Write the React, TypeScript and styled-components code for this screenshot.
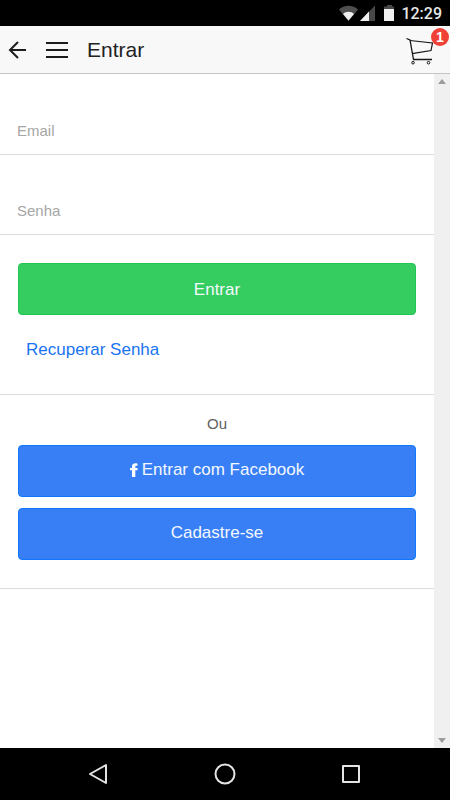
import React from "react";
import styled, { createGlobalStyle } from "styled-components";

const GlobalStyle = createGlobalStyle`
  *, *::before, *::after { box-sizing: border-box; }
  body {
    margin: 0;
    background: #fff;
    font-family: "Liberation Sans", Arial, sans-serif;
  }
  button, input { font-family: inherit; }
`;

const Screen = styled.div`
  display: flex;
  flex-direction: column;
  min-height: 100vh;
`;

const StatusBar = styled.div`
  display: flex;
  align-items: center;
  justify-content: flex-end;
  height: 26px;
  padding: 2px 8px 0 0;
  background: #000;
  color: #e6e6e6;
`;

const StatusIcons = styled.svg`
  display: block;
  margin-right: 6px;
`;

const Clock = styled.time`
  font: 500 16px/24px Roboto, sans-serif;
`;

const Header = styled.header`
  display: flex;
  align-items: center;
  height: 48px;
  padding: 0 16px 0 8px;
  background: #f8f8f8;
  border-bottom: 1px solid #c4c4c4;
`;

const IconButton = styled.button`
  display: block;
  margin: 0;
  padding: 0;
  border: 0;
  background: none;
  color: #1c1c1c;
  line-height: 0;
  cursor: pointer;
`;

const HeaderActions = styled.div`
  display: flex;
  align-items: center;
  gap: 18px;
`;

const Title = styled.h1`
  flex: 1;
  margin: 0 0 0 19px;
  color: #222;
  font-size: 21px;
  line-height: 24px;
  font-weight: 400;
`;

const CartButton = styled(IconButton)`
  position: relative;
  padding-top: 3px;
`;

const Badge = styled.span`
  position: absolute;
  top: -6px;
  right: -15px;
  width: 18px;
  height: 18px;
  border-radius: 50%;
  background: #ef4136;
  color: #fff;
  font-size: 14px;
  line-height: 18px;
  font-weight: 700;
  text-align: center;
`;

const Body = styled.div`
  display: flex;
  flex: 1;
`;

const Content = styled.main`
  flex: 1;
  min-width: 0;
`;

const ScrollTrack = styled.div`
  display: flex;
  flex-direction: column;
  justify-content: space-between;
  align-items: center;
  width: 16px;
  padding: 5px 0;
  background: #f0f0f0;
`;

const Field = styled.div`
  height: 80px;
  padding-top: 34px;
  border-bottom: 1px solid #dcdcdc;

  &:first-child { height: 81px; padding-top: 35px; }
`;

const TextInput = styled.input`
  display: block;
  width: 100%;
  height: 44px;
  padding: 0 17px 2px;
  border: 0;
  outline: 0;
  background: transparent;
  color: #222;
  font-size: 15px;

  &::placeholder { color: #a6a6a6; opacity: 1; }
`;

const Section = styled.section<{ $top: number }>`
  padding: ${({ $top }) => $top}px 18px 28px;
  border-bottom: 1px solid #dcdcdc;
`;

const ActionButton = styled.button<{ $tone: "green" | "blue" }>`
  display: flex;
  align-items: center;
  justify-content: center;
  gap: 4px;
  width: 100%;
  height: 52px;
  padding: 0 0 2px;
  border: 1px solid ${({ $tone }) => ($tone === "green" ? "#1fc653" : "#0f77fb")};
  border-radius: 4px;
  background: ${({ $tone }) => ($tone === "green" ? "#35cd60" : "#387ff5")};
  color: #f4f8ff;
  font-size: 17px;
  line-height: 24px;
  cursor: pointer;

  & + & { margin-top: 11px; }
`;

const SubmitButton = styled(ActionButton)`
  padding: 2px 0 0;
`;

const RecoverLink = styled.a`
  display: inline-block;
  margin: 23px 8px 4px;
  color: #1a73f0;
  font-size: 17px;
  line-height: 24px;
  text-decoration: none;
`;

const Divider = styled.p`
  margin: 0 0 11px;
  color: #606060;
  font-size: 15px;
  line-height: 20px;
  text-align: center;
`;

const NavBar = styled.nav`
  display: flex;
  align-items: center;
  justify-content: center;
  gap: 103px;
  height: 52px;
  background: #000;
`;

const NavButton = styled(IconButton)`
  color: #e4e4e4;
`;

export default function App() {
  return (
    <Screen>
      <GlobalStyle />
      <StatusBar>
        <StatusIcons width="56" height="18" viewBox="0 0 56 18" aria-hidden="true">
          <path d="M0 4.600C5.500-.4 13.500-.4 19 4.600L9.500 16Z" fill="#505050" />
          <path d="M4 9C7 6 12 6 15 9L9.500 15.500Z" fill="#f0f0f0" />
          <path d="M36 .500V16H21Z" fill="#484848" />
          <path d="M30 6.500V16H21Z" fill="#f0f0f0" />
          <path d="M48 0h5v1.500h2V4H45V1.500h3Z" fill="#484848" />
          <path d="M45 4h10v12H45Z" fill="#f0f0f0" />
        </StatusIcons>
        <Clock>12:29</Clock>
      </StatusBar>

      <Header>
        <HeaderActions>
          <IconButton type="button" aria-label="Voltar">
            <svg width="20" height="20" viewBox="0 0 20 20" fill="none" stroke="currentColor" strokeWidth="2">
              <path d="M18 10H2M10 2L2 10l8 8" />
            </svg>
          </IconButton>
          <IconButton type="button" aria-label="Menu">
            <svg width="22" height="20" viewBox="0 0 22 20" fill="none" stroke="currentColor" strokeWidth="2">
              <path d="M0 3h22M0 10h22M0 17h22" />
            </svg>
          </IconButton>
        </HeaderActions>
        <Title>Entrar</Title>
        <CartButton type="button" aria-label="Carrinho, 1 item">
          <svg width="28" height="28" viewBox="0 0 28 28" fill="none" stroke="#161616">
            <path d="M.5 1.500L4 3l3.500 19.500H26" strokeWidth="1.300" />
            <path d="M4 3.500L26.500 6l-1.500 7.500L6 16.700" strokeWidth="1.200" />
            <circle cx="7" cy="25.700" r="1.300" />
            <circle cx="22.500" cy="25.700" r="1.300" />
          </svg>
          <Badge>1</Badge>
        </CartButton>
      </Header>

      <Body>
        <Content>
          <form onSubmit={(event) => event.preventDefault()}>
            <Field>
              <TextInput type="email" aria-label="Email" placeholder="Email" />
            </Field>
            <Field>
              <TextInput type="password" aria-label="Senha" placeholder="Senha" />
            </Field>
            <Section $top={28}>
              <SubmitButton $tone="green" type="submit">Entrar</SubmitButton>
              <RecoverLink href="#recuperar">Recuperar Senha</RecoverLink>
            </Section>
          </form>
          <Section $top={19}>
            <Divider>Ou</Divider>
            <ActionButton $tone="blue" type="button">
              <svg width="8" height="14" viewBox="0 0 8 14" fill="#fff" aria-hidden="true">
                <path d="M7.500.500V2.800H6.300C5.500 2.800 5.300 3.200 5.300 3.900V5H7.500V7.300H5.300V14H2V7.300H0V5H2V3.600C2 1.400 3.400.300 5.500.300Z" />
              </svg>
              Entrar com Facebook
            </ActionButton>
            <ActionButton $tone="blue" type="button">Cadastre-se</ActionButton>
          </Section>
        </Content>
        <ScrollTrack aria-hidden="true">
          <svg width="8" height="5" viewBox="0 0 8 5"><path d="M0 5L4 0l4 5Z" fill="#9c9c9c" /></svg>
          <svg width="8" height="5" viewBox="0 0 8 5"><path d="M0 0l4 5 4-5Z" fill="#9c9c9c" /></svg>
        </ScrollTrack>
      </Body>

      <NavBar>
        <NavButton type="button" aria-label="Voltar">
          <svg width="24" height="24" viewBox="0 0 24 24" fill="none" stroke="currentColor" strokeWidth="2" strokeLinejoin="round">
            <path d="M20 3v18L4 12Z" />
          </svg>
        </NavButton>
        <NavButton type="button" aria-label="Início">
          <svg width="24" height="24" viewBox="0 0 24 24" fill="none" stroke="currentColor" strokeWidth="2">
            <circle cx="12" cy="12" r="9.500" />
          </svg>
        </NavButton>
        <NavButton type="button" aria-label="Recentes">
          <svg width="24" height="24" viewBox="0 0 24 24" fill="none" stroke="currentColor" strokeWidth="2" strokeLinejoin="round">
            <path d="M3 4h16v16H3Z" />
          </svg>
        </NavButton>
      </NavBar>
    </Screen>
  );
}
